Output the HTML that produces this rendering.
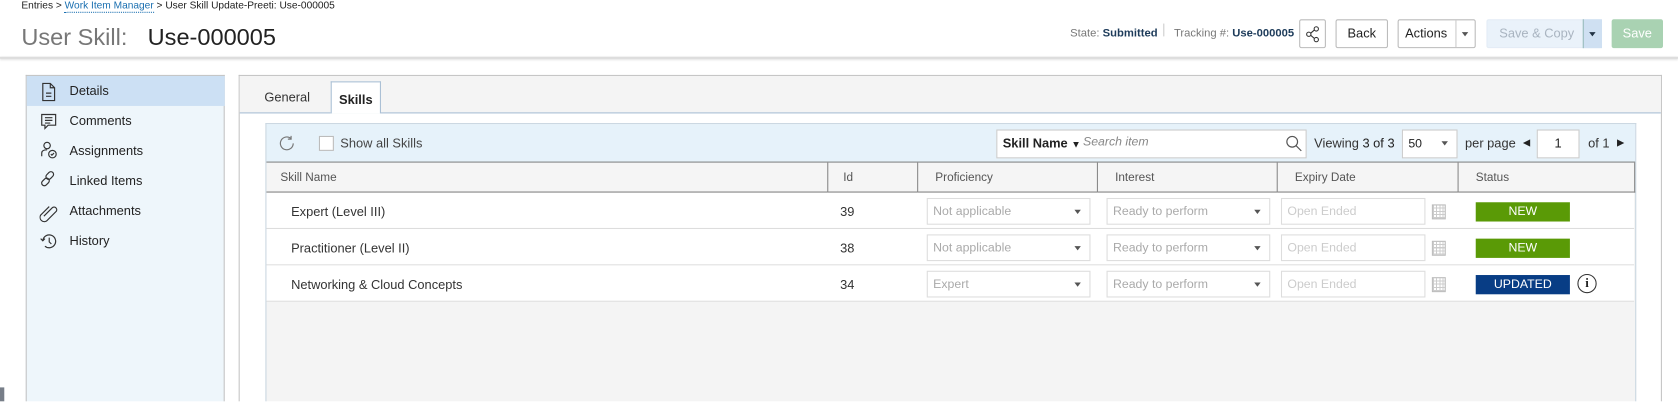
<!DOCTYPE html>
<html><head><meta charset="utf-8"><style>
*{box-sizing:border-box;margin:0;padding:0}
html,body{width:1678px;height:402px;overflow:hidden;background:#fff;font-family:"Liberation Sans",sans-serif;}
#o{position:relative;width:1678px;height:402px;overflow:hidden}
#w{position:absolute;left:0;top:0;width:1568px;height:375.6px;overflow:hidden;transform:scale(1.07015);transform-origin:0 0;font-size:12px;color:#222}
.a{position:absolute;white-space:nowrap}
.btn{position:absolute;border:1px solid #bbb;background:#fff;border-radius:2px;font-size:12px;text-align:center;line-height:25px}
.side div.it{position:absolute;left:0;width:185px;height:28px;line-height:28px;padding-left:40px;font-size:12px;color:#222}
.hd{position:absolute;top:152px;height:28px;line-height:28px;font-size:11px;color:#555;border-left:1px solid #888;padding-left:14px}
.row{position:absolute;left:249px;width:1278px;height:34px;background:#fff;border-bottom:1px solid #ddd}
.sel{position:absolute;height:25px;border:1px solid #ddd;background:#fff;color:#aaa;font-size:11.5px;line-height:25px;padding-left:5px}
.sel:after{content:"";position:absolute;right:8px;top:10px;border:3.5px solid transparent;border-top:4px solid #555}
.nd:after{display:none}
.badge{position:absolute;width:88px;height:18px;line-height:18px;color:#fff;text-align:center;font-size:11.5px}
.cal{position:absolute;width:13px;height:14px;border:1px solid #bbb;background:repeating-linear-gradient(90deg,#ccc 0 1px,transparent 1px 3px),repeating-linear-gradient(0deg,#ccc 0 1px,transparent 1px 3px)}
</style></head><body><div id="o"><div id="w">
<div class="a" style="left:20px;top:0;font-size:9.5px;color:#222">Entries &gt; <span style="color:#1a6fb0;border-bottom:1px dotted #1a6fb0">Work Item Manager</span> &gt; User Skill Update-Preeti: Use-000005</div>
<div class="a" style="left:20px;top:22px;font-size:22px;color:#777">User Skill:</div>
<div class="a" style="left:138px;top:22px;font-size:22px;color:#222">Use-000005</div>
<div style="position:absolute;left:0;top:53px;width:1568px;height:2px;background:#ddd;box-shadow:0 1px 2px #ddd"></div>
<div class="a" style="left:1000px;top:25px;font-size:10.5px;color:#777">State: <b style="color:#1d3b5a">Submitted</b></div>
<div style="position:absolute;left:1087px;top:22px;width:1px;height:12px;background:#ccc"></div>
<div class="a" style="left:1097px;top:25px;font-size:10.5px;color:#777">Tracking #: <b style="color:#1d3b5a">Use-000005</b></div>
<div class="btn" style="left:1214px;top:18px;width:25px;height:27px"><svg width="14" height="16" viewBox="0 0 14 16" style="margin-top:5px"><circle cx="10" cy="3" r="2" fill="none" stroke="#333"/><circle cx="3" cy="8" r="2" fill="none" stroke="#333"/><circle cx="10" cy="13" r="2" fill="none" stroke="#333"/><path d="M4.8 7 8.3 4M4.8 9 8.3 12" stroke="#333"/></svg></div>
<div class="btn" style="left:1248px;top:18px;width:49px;height:27px">Back</div>
<div class="btn" style="left:1306px;top:18px;width:73px;height:27px;text-align:left;padding-left:6px">Actions<span style="position:absolute;left:53px;top:0;width:1px;height:25px;background:#ccc"></span><span style="position:absolute;right:6px;top:11px;border:3.5px solid transparent;border-top:4px solid #555"></span></div>
<div class="btn" style="left:1389px;top:18px;width:108px;height:27px;background:#eaf2fa;border-color:#e3ecf5;color:#a9b4c0;text-align:left;padding-left:11px">Save &amp; Copy<span style="position:absolute;left:89px;top:-1px;width:18px;height:27px;background:#cfe0f2;border-left:1px solid #9bb"></span><span style="position:absolute;right:5px;top:11px;border:3.5px solid transparent;border-top:4px solid #234"></span></div>
<div class="btn" style="left:1506px;top:18px;width:48px;height:27px;background:#a9d2b2;border-color:#a9d2b2;color:#fff">Save</div>

<div class="side" style="position:absolute;left:24px;top:70px;width:186px;height:305px;background:#eef6fb;border:1px solid #c4c4c4;border-bottom:none">
<div class="it" style="top:0;background:#cce0f4">Details</div>
<div class="it" style="top:28px">Comments</div>
<div class="it" style="top:56px">Assignments</div>
<div class="it" style="top:84px">Linked Items</div>
<div class="it" style="top:112px">Attachments</div>
<div class="it" style="top:140px">History</div>
<svg style="position:absolute;left:12px;top:6px" width="18" height="170" viewBox="0 0 18 170" fill="none" stroke="#333" stroke-width="1.1">
<path d="M3 1h7l4 4v12H3z M10 1v4h4 M6 10h5M6 13h5"/>
<path d="M2 30h13v10H8l-3 3v-3H2z M5 33h7M5 35.5h7M5 38h5"/>
<circle cx="7" cy="59" r="3"/><path d="M2 69v-3c0-2 2-3 5-3"/><circle cx="12" cy="67" r="3.5"/><path d="M10.5 67l1 1 2-2"/>
<rect x="7" y="83" width="5" height="8" rx="2.5" transform="rotate(45 9.5 87)"/><rect x="3" y="89" width="5" height="8" rx="2.5" transform="rotate(45 5.5 93)"/>
<path d="M4 125l8-8a2.5 2.5 0 0 1 3.5 3.5l-9 9a4 4 0 0 1-5.5-5.5l8-8"/>
<path d="M3 148a6 6 0 1 1 2 5 M1 146l2 2 2-2 M9 145v4l2 2"/>
</svg>
</div>

<div style="position:absolute;left:223px;top:70px;width:1330px;height:305px;background:#fff;border:1px solid #c4c4c4;border-bottom:none">
<div style="position:absolute;left:0;top:0;width:1328px;height:35px;background:#f4f4f4;border-bottom:1px solid #a9bfd4"></div>
</div>
<div class="a" style="left:247px;top:84px;font-size:12px;color:#333">General</div>
<div style="position:absolute;left:309px;top:76px;width:47px;height:30px;background:#fff;border:1px solid #a9bfd4;border-bottom:none;font-size:12px;font-weight:bold;line-height:32px;text-align:center;color:#222">Skills</div>

<div style="position:absolute;left:248px;top:115px;width:1281px;height:260px;background:#f4f4f4;border:1px solid #c9d6e0;border-bottom:none"></div>
<div style="position:absolute;left:249px;top:116px;width:1279px;height:36px;background:#e6f2fa;border-bottom:1px solid #777"></div>
<svg class="a" style="left:259px;top:126px" width="18" height="18" viewBox="0 0 18 18" fill="none" stroke="#777" stroke-width="1.1"><path d="M15 8a6 6 0 1 1-2-4.5 M13 1v3h-3"/></svg>
<div style="position:absolute;left:298px;top:127px;width:14px;height:14px;border:1px solid #bbb;background:#fff"></div>
<div class="a" style="left:318px;top:127px;font-size:12px;color:#444">Show all Skills</div>
<div style="position:absolute;left:931px;top:121px;width:290px;height:27px;background:#fff;border:1px solid #ccc"></div>
<div class="a" style="left:937px;top:127px;font-size:12px;font-weight:bold;color:#222">Skill Name <span style="font-size:9px">▼</span></div>
<div class="a" style="left:1012px;top:127px;font-size:11.5px;font-style:italic;color:#888">Search item</div>
<svg class="a" style="left:1201px;top:126px" width="16" height="16" viewBox="0 0 16 16" fill="none" stroke="#555" stroke-width="1.1"><circle cx="6.5" cy="6.5" r="5"/><path d="M10 10l5 5"/></svg>
<div class="a" style="left:1228px;top:127px;font-size:12px;color:#333">Viewing <span style="color:#222">3 of 3</span></div>
<div class="sel" style="left:1310px;top:121px;width:52px;height:27px;color:#222;line-height:27px;border-color:#ccc">50</div>
<div class="a" style="left:1369px;top:127px;font-size:12px;color:#333">per page</div>
<div class="a" style="left:1423px;top:128px;font-size:9px;color:#222">◀</div>
<div style="position:absolute;left:1436px;top:121px;width:40px;height:27px;background:#fff;border:1px solid #ccc;text-align:center;line-height:25px;font-size:12px">1</div>
<div class="a" style="left:1484px;top:127px;font-size:12px;color:#333">of 1</div>
<div class="a" style="left:1511px;top:128px;font-size:9px;color:#222">▶</div>

<div style="position:absolute;left:249px;top:152px;width:1279px;height:28px;background:#f5f5f5;border-bottom:1px solid #777"></div>
<div class="hd" style="left:249px;border:none;padding-left:13px">Skill Name</div>
<div class="hd" style="left:773px">Id</div>
<div class="hd" style="left:857px;padding-left:16px">Proficiency</div>
<div class="hd" style="left:1025px;padding-left:16px">Interest</div>
<div class="hd" style="left:1193px;padding-left:16px">Expiry Date</div>
<div class="hd" style="left:1362px;padding-left:16px">Status</div>
<div style="position:absolute;left:1527px;top:152px;width:1px;height:28px;background:#888"></div>

<div class="row" style="top:180px"></div>
<div class="row" style="top:214px"></div>
<div class="row" style="top:248px"></div>
<div class="a" style="left:272px;top:191px;font-size:12px;color:#333">Expert (Level III)</div>
<div class="a" style="left:272px;top:225px;font-size:12px;color:#333">Practitioner (Level II)</div>
<div class="a" style="left:272px;top:259px;font-size:12px;color:#333">Networking &amp; Cloud Concepts</div>
<div class="a" style="left:785px;top:191px;font-size:12px;color:#333">39</div>
<div class="a" style="left:785px;top:225px;font-size:12px;color:#333">38</div>
<div class="a" style="left:785px;top:259px;font-size:12px;color:#333">34</div>
<div class="sel" style="left:866px;top:185px;width:153px">Not applicable</div>
<div class="sel" style="left:866px;top:219px;width:153px">Not applicable</div>
<div class="sel" style="left:866px;top:253px;width:153px">Expert</div>
<div class="sel" style="left:1034px;top:185px;width:153px">Ready to perform</div>
<div class="sel" style="left:1034px;top:219px;width:153px">Ready to perform</div>
<div class="sel" style="left:1034px;top:253px;width:153px">Ready to perform</div>
<div class="sel nd" style="left:1197px;top:185px;width:135px;color:#ccc">Open Ended</div>
<div class="sel nd" style="left:1197px;top:219px;width:135px;color:#ccc">Open Ended</div>
<div class="sel nd" style="left:1197px;top:253px;width:135px;color:#ccc">Open Ended</div>
<div class="cal" style="left:1338px;top:191px"></div>
<div class="cal" style="left:1338px;top:225px"></div>
<div class="cal" style="left:1338px;top:259px"></div>
<div class="badge" style="left:1379px;top:189px;background:#5a9a06">NEW</div>
<div class="badge" style="left:1379px;top:223px;background:#5a9a06">NEW</div>
<div class="badge" style="left:1379px;top:257px;background:#083d85">UPDATED</div>
<div style="position:absolute;left:1474px;top:256px;width:18px;height:18px;border:1.5px solid #333;border-radius:50%;text-align:center;font-size:12px;font-weight:bold;line-height:15px;font-family:'Liberation Serif',serif">i</div>
<div style="position:absolute;left:0;top:362px;width:4px;height:13px;background:#777e88"></div>
</div></div></body></html>
